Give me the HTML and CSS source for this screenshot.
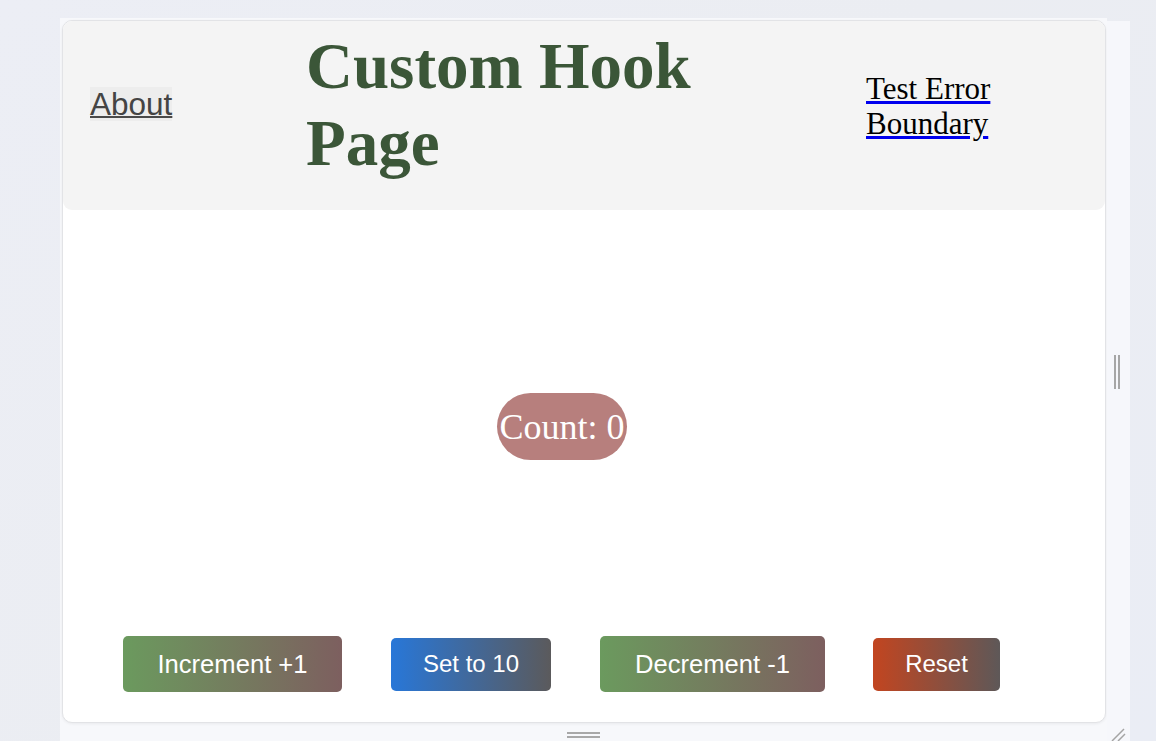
FILE: index.html
```html
<!DOCTYPE html>
<html lang="en">
<head>
<meta charset="utf-8">
<title>Custom Hook Page</title>
<link rel="stylesheet" href="styles.css">
</head>
<body>
<div class="frame">
  <div class="stage">
    <div class="card">
      <header class="header">
        <div class="nav-left"><a class="about" href="#">About</a></div>
        <h1 class="title">Custom Hook Page</h1>
        <div class="nav-right"><a class="err" href="#">Test Error Boundary</a></div>
      </header>
      <main class="main">
        <div class="count-row"><div class="count">Count: 0</div></div>
        <div class="buttons">
          <button class="btn btn-green btn-big">Increment +1</button>
          <button class="btn btn-blue">Set to 10</button>
          <button class="btn btn-green btn-big btn-dec">Decrement -1</button>
          <button class="btn btn-red">Reset</button>
        </div>
      </main>
    </div>
    <div class="bottom-strip"><span class="hgrip"></span></div>
  </div>
  <div class="side-strip"><span class="vgrip"></span></div>
  <svg class="corner" width="16" height="14" viewBox="0 0 16 14">
    <line x1="2" y1="14" x2="14" y2="2" stroke="#a4a4a4" stroke-width="1.5"/>
    <line x1="8" y1="14" x2="15" y2="7" stroke="#a4a4a4" stroke-width="1.5"/>
  </svg>
</div>
</body>
</html>
```
FILE: styles.css
```css
html, body {
  margin: 0;
  padding: 0;
}
body {
  width: 1156px;
  height: 741px;
  overflow: hidden;
  background: linear-gradient(135deg, #eceef5 0%, #ebedf2 50%, #eaedf5 100%);
  font-family: "Liberation Serif", "Times New Roman", serif;
}
.frame {
  position: relative;
  display: flex;
  margin: 18px 0 0 60px;
  width: 1070px;
  height: 723px;
}
.stage {
  width: 1047px;
  background: #f7f8fb;
  padding: 2px 0 0 2px;
  box-sizing: border-box;
  display: flex;
  flex-direction: column;
}
.card {
  width: 1044px;
  height: 703px;
  flex: none;
  box-sizing: border-box;
  background: #fff;
  border: 1px solid #e2e3e6;
  border-radius: 10px;
  box-shadow: 0 1px 3px rgba(0, 0, 0, 0.06);
  display: flex;
  flex-direction: column;
}
.header {
  height: 189px;
  flex: none;
  background: #f4f4f4;
  border-radius: 9px;
  display: flex;
  align-items: flex-start;
  padding-left: 27px;
}
.nav-left {
  width: 216px;
  margin-top: 66px;
}
.about {
  display: inline-block;
  font-family: "Liberation Sans", Arial, sans-serif;
  font-size: 31.5px;
  line-height: 34px;
  color: #444;
  background: #ededed;
  text-decoration: underline;
  text-decoration-thickness: 2px;
  text-decoration-color: #4a4a4a;
}
.title {
  width: 430px;
  margin: 7px 130px 0 0;
  font-family: "Liberation Serif", "Times New Roman", serif;
  font-weight: bold;
  font-size: 65px;
  line-height: 77px;
  color: #3b5638;
}
.nav-right {
  width: 140px;
  margin-top: 50px;
  font-size: 31px;
  line-height: 35px;
}
.err {
  color: #000;
  text-decoration: underline;
  text-decoration-color: #0000ee;
  text-decoration-thickness: 3px;
}
.main {
  flex: 1;
  display: flex;
  flex-direction: column;
  padding-top: 183px;
}
.count-row {
  display: flex;
  justify-content: center;
  padding-right: 44px;
}
.count {
  width: 130px;
  height: 67px;
  border-radius: 34px;
  background: #b77f7d;
  color: #fff;
  font-size: 36px;
  display: flex;
  align-items: center;
  justify-content: center;
}
.buttons {
  display: flex;
  align-items: center;
  gap: 49px;
  margin: 176px 0 0 60px;
  height: 56px;
}
.btn {
  border: none;
  border-radius: 5px;
  color: #fff;
  font-family: "Liberation Sans", Arial, sans-serif;
  font-size: 24px;
  height: 53px;
  padding: 0;
  cursor: pointer;
}
.btn-big {
  height: 56px;
  font-size: 25.6px;
  width: 219px;
}
.btn-dec {
  width: 225px;
}
.btn-green {
  background: linear-gradient(90deg, #6b9a5e 0%, #7d5f5f 100%);
}
.btn-blue {
  width: 160px;
  background: linear-gradient(90deg, #2877d8 0%, #5b5a5c 100%);
}
.btn-red {
  width: 127px;
  margin-left: -1px;
  background: linear-gradient(90deg, #c24520 0%, #5e5858 100%);
}
.bottom-strip {
  flex: 1;
  display: flex;
  justify-content: center;
  align-items: flex-start;
  padding-top: 9px;
  margin-left: -2px;
}
.hgrip {
  width: 33px;
  height: 2px;
  border-top: 2px solid #a8a8a8;
  border-bottom: 2px solid #a8a8a8;
}
.side-strip {
  width: 23px;
  margin-top: 3px;
  background: #f6f7fb;
  display: flex;
  align-items: flex-start;
  padding-top: 334px;
  box-sizing: border-box;
  height: 720px;
}
.vgrip {
  margin-left: 7px;
  width: 2px;
  height: 34px;
  border-left: 2px solid #a6a6a6;
  border-right: 2px solid #a6a6a6;
}
.corner {
  position: absolute;
  left: 1050px;
  top: 709px;
}
```
